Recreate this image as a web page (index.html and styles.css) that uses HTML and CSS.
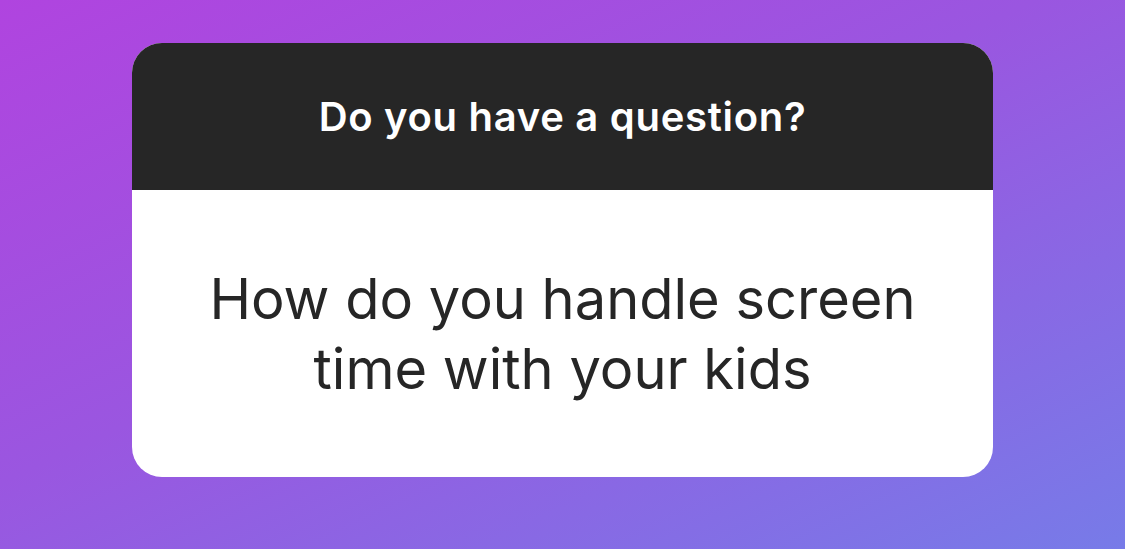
FILE: index.html
```html
<!DOCTYPE html>
<html>
<head>
<meta charset="utf-8">
<link rel="stylesheet" href="styles.css">
</head>
<body>
<main class="stage">
  <section class="card">
    <header class="card-head">Do you have a question?</header>
    <div class="card-body">
      <p class="answer">How do you handle screen<br>time with your kids</p>
    </div>
  </section>
</main>
</body>
</html>
```
FILE: styles.css
```css
html, body {
  margin: 0;
  padding: 0;
}
body {
  width: 1125px;
  height: 549px;
  overflow: hidden;
  font-family: Inter, "Noto Sans", sans-serif;
  background: linear-gradient(155deg, #b044df 0%, #9a56e0 45%, #777be8 100%);
}
.stage {
  height: 549px;
  box-sizing: border-box;
  padding: 43px 0 0 132px;
}
.card {
  width: 861px;
  height: 434px;
  border-radius: 30px;
  overflow: hidden;
  display: flex;
  flex-direction: column;
  background: #fff;
}
.card-head {
  height: 147px;
  flex: none;
  background: #262626;
  color: #fff;
  display: flex;
  align-items: center;
  justify-content: center;
  font-size: 40px;
  font-weight: 600;
  letter-spacing: 0.7px;
}
.card-body {
  flex: 1;
  display: flex;
  align-items: center;
  justify-content: center;
}
.answer {
  margin: 0;
  text-align: center;
  color: #262626;
  font-size: 56px;
  line-height: 70px;
  font-weight: 400;
}
```
